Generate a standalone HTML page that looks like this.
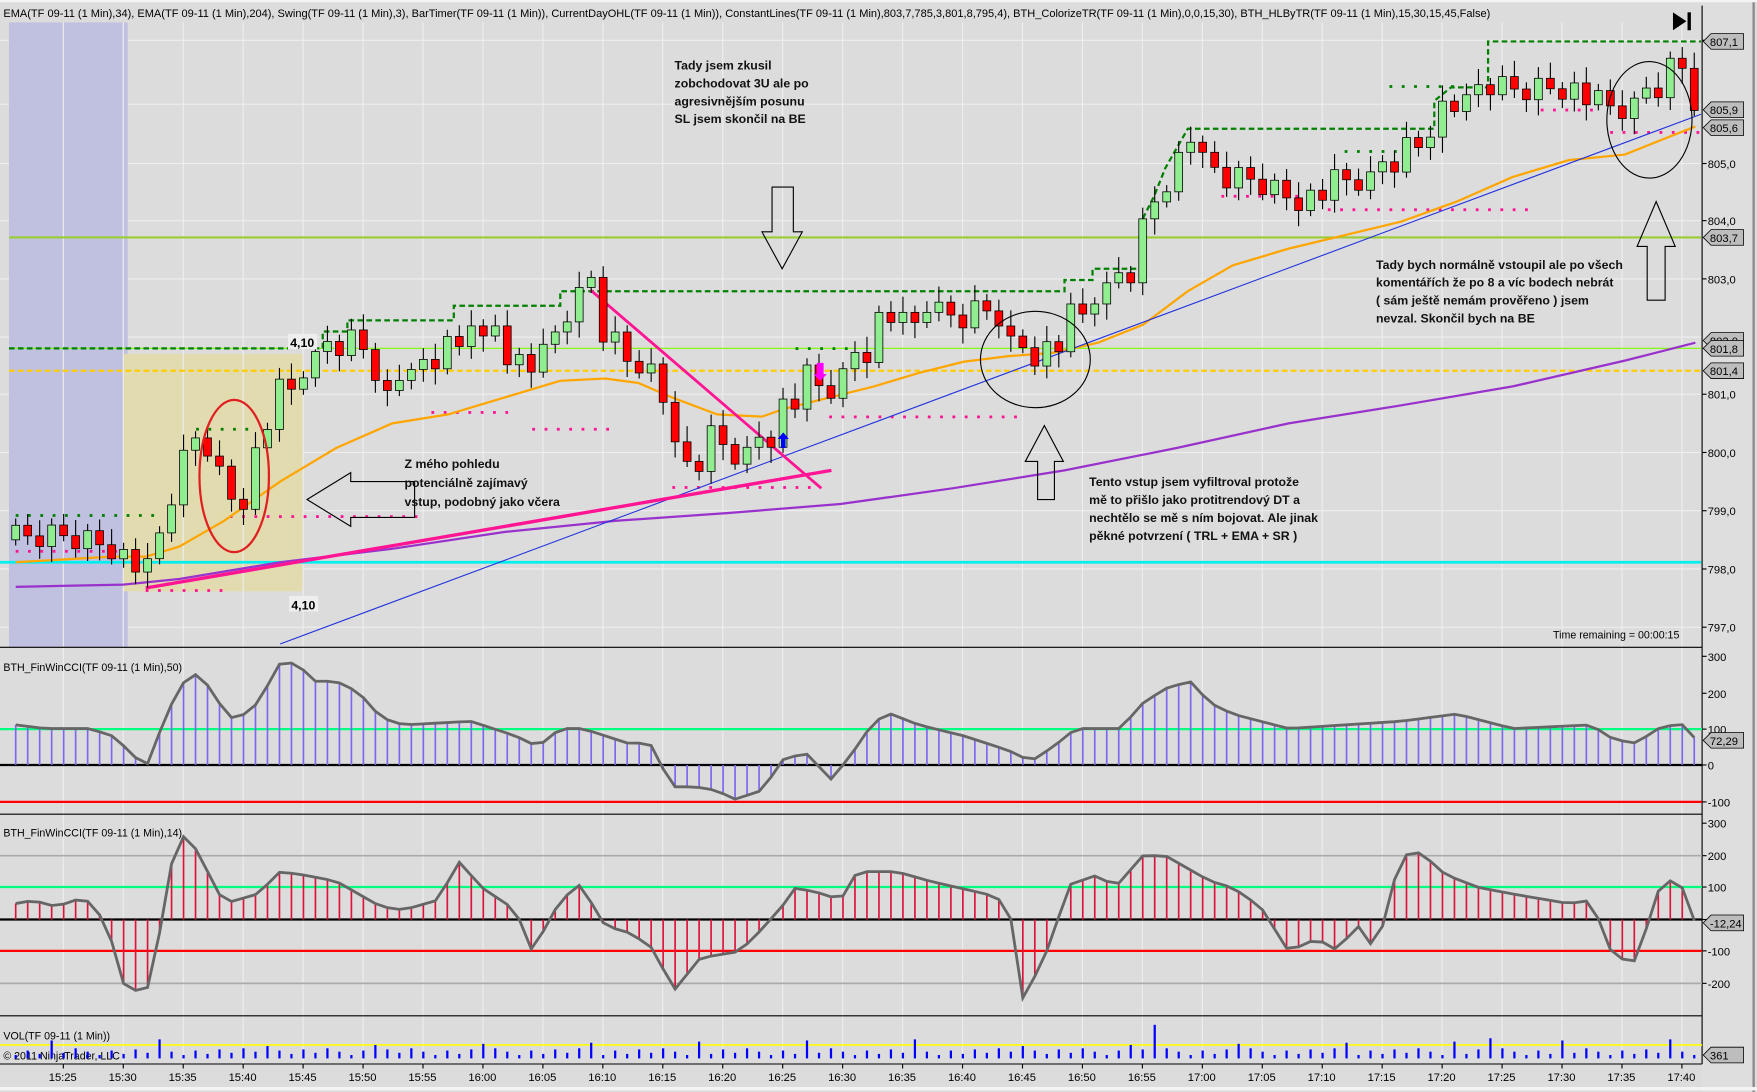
<!DOCTYPE html>
<html><head><meta charset="utf-8"><style>
html,body{margin:0;padding:0;background:#dcdcdc;overflow:hidden}
svg{display:block}
text{font-family:"Liberation Sans",sans-serif}
.ann{font-family:"Liberation Sans",sans-serif;font-weight:bold;font-size:11px;fill:#111}
</style></head><body>
<svg id="s" width="1757" height="1092" viewBox="0 0 1568 975" preserveAspectRatio="none" xmlns="http://www.w3.org/2000/svg">
<rect x="0" y="0" width="1568" height="975" fill="#dcdcdc"/>
<rect x="1519" y="0" width="46" height="975" fill="#dedede"/>
<line x1="1565" y1="0" x2="1565" y2="975" stroke="#888" stroke-width="2"/>
<line x1="0" y1="1" x2="1568" y2="1" stroke="#f4f4f4" stroke-width="2"/>
<line x1="0" y1="972" x2="1568" y2="972" stroke="#f4f4f4" stroke-width="3"/>
<g id="grid"></g>
<rect x="8" y="20" width="106" height="558" fill="#c0c0e0"/>
<rect x="110" y="316" width="160" height="212" fill="#e2dbb0"/>
<g id="vgrid"></g>
<text x="3" y="15" font-size="10" textLength="1327" lengthAdjust="spacingAndGlyphs">EMA(TF 09-11 (1 Min),34), EMA(TF 09-11 (1 Min),204), Swing(TF 09-11 (1 Min),3), BarTimer(TF 09-11 (1 Min)), CurrentDayOHL(TF 09-11 (1 Min)), ConstantLines(TF 09-11 (1 Min),803,7,785,3,801,8,795,4), BTH_ColorizeTR(TF 09-11 (1 Min),0,0,15,30), BTH_HLByTR(TF 09-11 (1 Min),15,30,15,45,False)</text>
<polygon points="1493,11 1493,27 1505,19" fill="#000"/><rect x="1506" y="11" width="3" height="16" fill="#000"/>
<line x1="8" y1="212" x2="1518" y2="212" stroke="#9acd32" stroke-width="2"/>
<line x1="8" y1="311" x2="1518" y2="311" stroke="#7cfc00" stroke-width="1"/>
<line x1="8" y1="331" x2="1518" y2="331" stroke="#ffcc00" stroke-width="2" stroke-dasharray="5,3"/>
<line x1="0" y1="502" x2="1518" y2="502" stroke="#00eeee" stroke-width="2.5"/>
<polyline fill="none" stroke="#008000" stroke-width="2" stroke-dasharray="5,3" points="8,311 288,311 288,296 310,296 310,286 405,286 405,273 500,273 500,260 950,260 950,250 975,250 975,240 1020,240 1020,195 1030,175 1040,150 1060,115 1280,115 1280,90 1295,78 1328,78 1328,37 1518,37"/>
<g id="dots"></g>
<polyline id="ema34" fill="none" stroke="#ffa500" stroke-width="2"/>
<polyline id="ema204" fill="none" stroke="#9932cc" stroke-width="2"/>
<line x1="250" y1="575" x2="1518" y2="102" stroke="#2233dd" stroke-width="1"/>
<line x1="130" y1="525" x2="742" y2="420" stroke="#ff1493" stroke-width="3"/>
<line x1="527" y1="259" x2="733" y2="436" stroke="#ff1493" stroke-width="2.5"/>
<g id="candles"></g>
<ellipse cx="209" cy="425" rx="31" ry="68" fill="none" stroke="#e02020" stroke-width="2"/>
<ellipse cx="924" cy="321" rx="49" ry="43" fill="none" stroke="#000" stroke-width="1"/>
<ellipse cx="1472" cy="107" rx="38" ry="52" fill="none" stroke="#000" stroke-width="1"/>
<polygon points="689,167 708,167 708,207 716,207 698,240 680,207 689,207" fill="none" stroke="#000" stroke-width="1"/>
<polygon points="370,430 370,462 313,462 313,470 274,446 313,422 313,430" fill="none" stroke="#000" stroke-width="1"/>
<polygon points="926,446 941,446 941,412 949,412 932,380 915,412 926,412" fill="none" stroke="#000" stroke-width="1"/>
<polygon points="1470,268 1486,268 1486,220 1495,220 1478,180 1461,220 1470,220" fill="none" stroke="#000" stroke-width="1"/>
<polygon points="729,324 735,324 735,334 738,334 732,340 726,334 729,334" fill="#ff00ff"/>
<polygon points="697,400 701,400 701,392 704,392 699,386 694,392 697,392" fill="#0000ff"/>
<text class="ann" x="602" y="62">Tady jsem zkusil</text>
<text class="ann" x="602" y="78">zobchodovat 3U ale po</text>
<text class="ann" x="602" y="94">agresivnějším posunu</text>
<text class="ann" x="602" y="110">SL jsem skončil na BE</text>
<text class="ann" x="361" y="418">Z mého pohledu</text>
<text class="ann" x="361" y="435">potenciálně zajímavý</text>
<text class="ann" x="361" y="452">vstup, podobný jako včera</text>
<text class="ann" x="972" y="434">Tento vstup jsem vyfiltroval protože</text>
<text class="ann" x="972" y="450">mě to přišlo jako protitrendový DT a</text>
<text class="ann" x="972" y="466">nechtělo se mě s ním bojovat. Ale jinak</text>
<text class="ann" x="972" y="482">pěkné potvrzení ( TRL + EMA + SR )</text>
<text class="ann" x="1228" y="240">Tady bych normálně vstoupil ale po všech</text>
<text class="ann" x="1228" y="256">komentářích že po 8 a víc bodech nebrát</text>
<text class="ann" x="1228" y="272">( sám ještě nemám prověřeno ) jsem</text>
<text class="ann" x="1228" y="288">nevzal. Skončil bych na BE</text>
<rect x="257" y="298" width="26" height="14" fill="#eee"/>
<text x="259" y="310" font-size="11" font-weight="bold">4,10</text>
<rect x="258" y="532" width="26" height="14" fill="#eee"/>
<text x="260" y="544" font-size="11" font-weight="bold">4,10</text>
<text x="1386" y="570" font-size="9.5">Time remaining = 00:00:15</text>
<line x1="0" y1="578" x2="1519" y2="578" stroke="#000"/>
<line x1="0" y1="727" x2="1519" y2="727" stroke="#000"/>
<line x1="0" y1="907" x2="1519" y2="907" stroke="#000"/>
<line x1="1519" y1="5" x2="1519" y2="950" stroke="#000"/>
<line x1="0" y1="950" x2="1519" y2="950" stroke="#000"/>
<text x="3" y="599" font-size="9.5">BTH_FinWinCCI(TF 09-11 (1 Min),50)</text>
<text x="3" y="747" font-size="9.5">BTH_FinWinCCI(TF 09-11 (1 Min),14)</text>
<text x="3" y="928" font-size="9.5">VOL(TF 09-11 (1 Min))</text>
<text x="3" y="946" font-size="9.5">© 2011 NinjaTrader, LLC</text>
<line x1="0" y1="651" x2="1519" y2="651" stroke="#00ff7f" stroke-width="2"/>
<line x1="0" y1="683" x2="1519" y2="683" stroke="#000" stroke-width="2"/>
<line x1="0" y1="716" x2="1519" y2="716" stroke="#ff0000" stroke-width="2"/>
<line x1="0" y1="764" x2="1519" y2="764" stroke="#aaa" stroke-width="1.5"/>
<line x1="0" y1="792" x2="1519" y2="792" stroke="#00ff7f" stroke-width="2"/>
<line x1="0" y1="821" x2="1519" y2="821" stroke="#000" stroke-width="2"/>
<line x1="0" y1="849" x2="1519" y2="849" stroke="#ff0000" stroke-width="2"/>
<line x1="0" y1="878" x2="1519" y2="878" stroke="#aaa" stroke-width="1.5"/>
<line x1="0" y1="933" x2="1519" y2="933" stroke="#ffff00" stroke-width="1.5"/>
<g id="cci"></g>
<g id="axis" font-size="10"></g>
</svg>
<script>
(function(){
var NS="http://www.w3.org/2000/svg";
function el(p,t,a,txt){var e=document.createElementNS(NS,t);for(var k in a)e.setAttribute(k,a[k]);if(txt!=null)e.textContent=txt;document.getElementById(p).appendChild(e);return e;}
function interp(K,x){if(x<=K[0][0])return K[0][1];for(var i=1;i<K.length;i++){if(x<=K[i][0]){var a=K[i-1],b=K[i];return a[1]+(b[1]-a[1])*(x-a[0])/(b[0]-a[0]);}}return K[K.length-1][1];}
var N=141;function bx(i){return 14+i*10.7;}
var times=["15:25","15:30","15:35","15:40","15:45","15:50","15:55","16:00","16:05","16:10","16:15","16:20","16:25","16:30","16:35","16:40","16:45","16:50","16:55","17:00","17:05","17:10","17:15","17:20","17:25","17:30","17:35","17:40"];
for(var t=0;t<times.length;t++){var gx=56.5+t*53.5;el('vgrid','line',{x1:gx,y1:20,x2:gx,y2:950,stroke:'#eeeeee','stroke-width':1});el('axis','line',{x1:gx,y1:950,x2:gx,y2:954,stroke:'#000'});el('axis','text',{x:gx-13,y:965},times[t]);}
var pl=[[807,36],[805,146],[804,197],[803,249],[801,352],[800,404],[799,456],[798,508],[797,560]];
[36,93,146,197,249,301,352,404,456,508,560].forEach(function(y){el('grid','line',{x1:0,y1:y,x2:1519,y2:y,stroke:'#eeeeee'});});
pl.forEach(function(p){el('axis','line',{x1:1519,y1:p[1],x2:1523,y2:p[1],stroke:'#000'});el('axis','text',{x:1524,y:p[1]+4},p[0].toFixed(1).replace('.',','));});
[[300,586],[200,619],[100,651],[0,683],[-100,716],[300,735],[200,764],[100,792],[0,821],[-100,849],[-200,878]].forEach(function(p){el('axis','line',{x1:1519,y1:p[1],x2:1523,y2:p[1],stroke:'#000'});el('axis','text',{x:1524,y:p[1]+4},String(p[0]));});
function tag(y,txt){el('axis','polygon',{points:'1520,'+y+' 1527,'+(y-7)+' 1556,'+(y-7)+' 1556,'+(y+7)+' 1527,'+(y+7),fill:'#bdbdbd',stroke:'#000','stroke-width':0.7});el('axis','text',{x:1526,y:y+4},txt);}
tag(37,'807,1');tag(98,'805,9');tag(114,'805,6');tag(212,'803,7');tag(304,'802,0');tag(311,'801,8');tag(331,'801,4');tag(661,'72,29');tag(824,'-12,24');tag(942,'361');
var K=[[14,482],[60,478],[100,486],[120,505],[132,512],[145,470],[160,420],[175,390],[190,400],[205,445],[218,430],[232,395],[250,350],[270,330],[290,320],[310,300],[325,310],[340,335],[360,350],[380,330],[400,310],[420,280],[440,300],[460,320],[480,330],[500,290],[515,268],[527,262],[540,300],[555,320],[575,320],[590,345],[605,420],[620,410],[635,390],[650,400],[665,410],[680,385],[700,360],[715,335],[735,350],[750,345],[765,310],[780,290],[800,275],[830,282],[860,285],[885,270],[900,295],[920,315],[935,310],[950,290],[970,270],[990,262],[1005,250],[1015,220],[1025,185],[1040,165],[1060,125],[1075,140],[1090,160],[1120,160],[1150,175],[1170,175],[1200,160],[1230,165],[1250,135],[1270,118],[1290,92],[1310,98],[1328,75],[1345,80],[1370,78],[1400,75],[1420,92],[1440,98],[1460,98],[1475,85],[1490,60],[1505,55],[1513,90]];
var prev=interp(K,bx(0));
for(var i=0;i<N;i++){var x=bx(i),c=interp(K,x)+((i*37)%11-5)*2.6;var o=prev;if(Math.abs(c-o)<8)c=o+(i%2?9:-9);var tp=Math.min(o,c),bt=Math.max(o,c);var up=c<o;
el('candles','line',{x1:x,y1:tp-6-(i%3)*4,x2:x,y2:bt+5+(i%4)*3,stroke:'#000','stroke-width':1});
el('candles','rect',{x:x-3.5,y:tp,width:7,height:bt-tp,fill:up?'#90ee90':'#ff0000',stroke:'#000','stroke-width':0.7});prev=c;}
function dotted(x1,x2,y,col){for(var xx=x1;xx<=x2;xx+=11)el('dots','rect',{x:xx,y:y-1,width:2.5,height:2.5,fill:col});}
dotted(14,110,492,'#ff1493');dotted(14,135,460,'#008000');dotted(130,200,527,'#ff1493');dotted(175,225,383,'#008000');dotted(205,370,461,'#ff1493');dotted(385,460,368,'#ff1493');dotted(475,545,383,'#ff1493');dotted(600,730,435,'#ff1493');dotted(710,760,311,'#008000');dotted(740,905,372,'#ff1493');dotted(1090,1160,175,'#ff1493');dotted(1185,1365,187,'#ff1493');dotted(1200,1245,135,'#008000');dotted(1375,1420,98,'#ff1493');dotted(1437,1518,118,'#ff1493');dotted(1240,1300,77,'#008000');
var E34=[[14,502],[100,497],[130,497],[160,488],[200,465],[250,430],[300,400],[350,378],[400,370],[450,355],[500,340],[540,338],[570,342],[600,355],[640,370],[680,372],[700,365],[740,355],[780,345],[820,333],[860,323],[900,318],[940,315],[980,306],[1020,290],[1060,260],[1100,237],[1150,222],[1200,210],[1250,198],[1300,180],[1350,158],[1400,143],[1450,138],[1500,118],[1513,113]];
var E204=[[14,524],[60,523],[110,522],[160,517],[250,502],[350,490],[450,475],[550,465],[650,458],[750,450],[850,436],[950,420],[1050,400],[1150,378],[1250,362],[1350,345],[1450,322],[1513,306]];
document.getElementById('ema34').setAttribute('points',E34.map(function(p){return p.join(',')}).join(' '));
document.getElementById('ema204').setAttribute('points',E204.map(function(p){return p.join(',')}).join(' '));
var C1=[[14,110],[40,100],[80,100],[100,80],[115,40],[130,-10],[150,150],[170,260],[185,220],[200,150],[210,120],[230,170],[250,280],[265,280],[280,230],[300,230],[320,200],[340,130],[360,110],[420,120],[460,80],[480,50],[500,100],[520,100],[560,60],[580,60],[600,-60],[620,-60],[640,-70],[655,-95],[680,-70],[700,20],[720,30],[742,-40],[760,30],[780,120],[795,140],[820,110],[860,80],[900,40],[920,10],[940,50],[960,100],[1000,100],[1020,170],[1040,210],[1062,230],[1080,170],[1100,140],[1150,100],[1250,120],[1300,140],[1350,100],[1420,110],[1440,70],[1460,60],[1480,100],[1500,115],[1513,72]];
var C2=[[14,50],[30,60],[50,40],[75,70],[95,-10],[110,-200],[130,-240],[145,0],[158,280],[175,220],[200,50],[230,80],[250,150],[270,140],[300,120],[320,80],[340,40],[360,30],[390,60],[410,180],[430,100],[460,30],[475,-100],[500,60],[518,110],[540,-20],[560,-40],[580,-80],[602,-220],[625,-120],[660,-100],[680,-30],[700,50],[710,100],[735,80],[750,60],[765,150],[800,150],[830,120],[880,80],[900,50],[913,-250],[932,-120],[955,110],[980,140],[995,100],[1020,200],[1040,200],[1060,160],[1080,120],[1100,100],[1125,40],[1150,-100],[1175,-60],[1195,-100],[1210,-10],[1228,-100],[1250,200],[1268,210],[1290,140],[1320,100],[1350,80],[1400,50],[1420,60],[1440,-120],[1460,-130],[1480,90],[1497,140],[1513,-12]];
var p1=[],p2=[];
for(var j=0;j<N;j++){var xj=bx(j),v1=interp(C1,xj),v2=interp(C2,xj);var y1=683-v1*0.325,y2=821-v2*0.285;p1.push(xj+','+y1);p2.push(xj+','+y2);
el('cci','line',{x1:xj,y1:683,x2:xj,y2:y1,stroke:'#7b68ee','stroke-width':1.5});
el('cci','line',{x1:xj,y1:821,x2:xj,y2:y2,stroke:'#dc143c','stroke-width':1.5});
var vh=3+((j*53)%7);if(j%9==3)vh+=8;if(j==95)vh=30;if(j==123)vh=18;
el('cci','rect',{x:xj-1,y:945-vh,width:2,height:vh,fill:'#0000ff'});}
el('cci','polyline',{points:p1.join(' '),fill:'none',stroke:'#666','stroke-width':2.5});
el('cci','polyline',{points:p2.join(' '),fill:'none',stroke:'#666','stroke-width':2.5});
})();
</script>
</body></html>
